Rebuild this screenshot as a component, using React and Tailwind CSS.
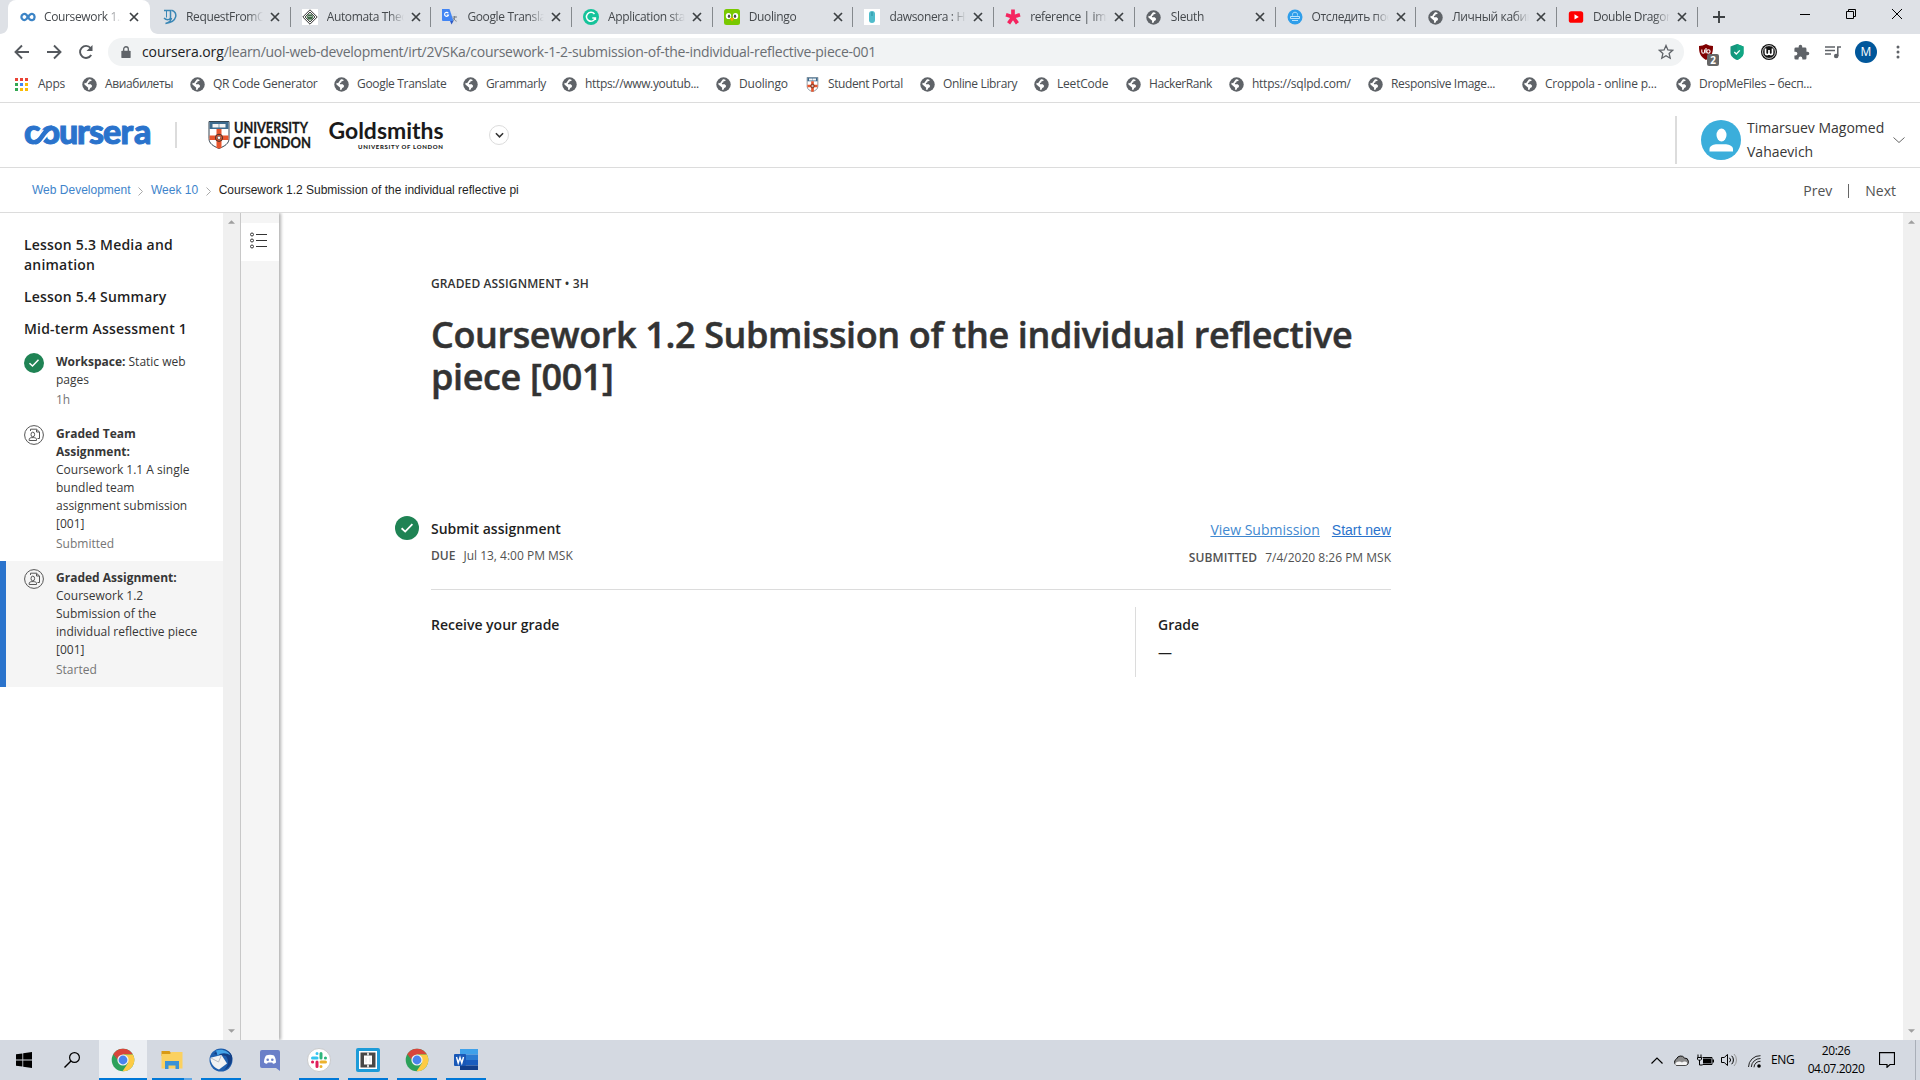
import React from "react";

const SEGOE = "font-['Open_Sans','Noto_Sans',sans-serif]";
const OPEN = "font-['Open_Sans',sans-serif]";
const ARIAL = "font-['Liberation_Sans',Arial,sans-serif]";

function Globe() {
  return (
    <svg viewBox="0 0 16 16" className="size-[15px] shrink-0">
      <circle cx="8" cy="8" r="7.7" fill="#5f6368" />
      <path d="M7.200 2.600c1.200-.3 2.200 0 3.200.6l-.6 1.100-1.700.2-.4 1.300-1.400.7.1 1.200h2.900l1.500 1.600-.5 1.500-1.500 1-.8 1.700c-.6.2-1.200.2-1.700 0l.3-2-1.500-1.500-2.500-2c-.1-.6 0-1.200.2-1.800l1.500.5L5.800 4.600Z" fill="#fff" />
    </svg>
  );
}

function Crest({ className }) {
  return (
    <svg viewBox="0 0 21 28" className={className}>
      <path d="M.5.5h20v17c0 5-4 7.500-10 10-6-2.500-10-5-10-10Z" fill="#fff" stroke="#34434f" />
      <path d="M1 1h19v7H1Z" fill="#3f6c8f" />
      <path d="M4 3h6.200v3.600H4ZM10.800 3H17v3.600h-6.200Z" fill="#f4f4f4" />
      <path d="M8 8h5v19l-2.500.6L8 27ZM1 14.500h19v4.500H1Z" fill="#e8552d" />
      <circle cx="10.500" cy="16.800" r="3.600" fill="#e8552d" stroke="#40302c" />
      <circle cx="10.500" cy="16.800" r="1.700" fill="#fff" stroke="#333" strokeWidth=".6" />
    </svg>
  );
}

function Fav({ kind }) {
  const c = "size-4 shrink-0";
  if (kind === "coursera")
    return (
      <svg viewBox="0 0 16 16" className={c}>
        <path d="M6.400 10C4.300 12.200 1.400 10.600 1.400 8s3-4.200 5.200-2l2.800 4c2 2.200 5.200 1 5.200-2s-3.200-4.200-5-2l-3.200 4" fill="none" stroke="#3c84c6" strokeWidth="2.300" />
      </svg>
    );
  if (kind === "req")
    return (
      <svg viewBox="0 0 16 16" className={c}>
        <path d="M3 1.500h6.500v7c0 2.500-4 3-6.500.5M10.500 1.200c6.500 1.500 6.500 12-6 13.300C8 13.500 10 12 10.500 9" fill="none" stroke="#3b87b5" strokeWidth="1.500" />
        <path d="M5.500 2v6.500" stroke="#3b87b5" strokeWidth="1" />
      </svg>
    );
  if (kind === "automata")
    return (
      <svg viewBox="0 0 16 16" className={c}>
        <path d="M0 0h16v16H0Z" fill="#fff" />
        <path d="m8 .8 7.200 7.200L8 15.200.8 8Z" fill="none" stroke="#333" />
        <path d="m8 3 5 5-5 5-5-5Z" fill="#cfe0cf" stroke="#333" strokeWidth=".9" />
        <path d="M6 5.500h4l1 2.500-1 2.500H6L5 8Z" fill="#42684a" />
        <path d="M6.500 7h1v1h-1ZM8.500 7h1v1h-1Z" fill="#fff" />
      </svg>
    );
  if (kind === "translate")
    return (
      <svg viewBox="0 0 16 16" className={c}>
        <path d="M7 4h8.500v11.500H9.500Z" fill="#dbdfe4" />
        <path d="M0 0h7.500l4 12H1a1 1 0 0 1-1-1Z" fill="#4285f4" />
        <path d="m8 12 3.500 0-2 3.500Z" fill="#2a56c6" />
        <path d="M6.300 4.300A2 2 0 1 0 6.500 6H4.700" fill="none" stroke="#fff" strokeWidth="1.100" />
        <path d="M10.500 8h4.500M12.700 7v1c0 2-1 3.500-2 4M11.500 9c.5 1.500 1.500 2.500 3 3.200" fill="none" stroke="#6b7480" strokeWidth=".9" />
      </svg>
    );
  if (kind === "grammarly")
    return (
      <svg viewBox="0 0 16 16" className={c}>
        <circle cx="8" cy="8" r="8" fill="#15c39a" />
        <path d="M11.500 5A4.500 4.500 0 1 0 12.300 9H9.300M12.400 9v2" fill="none" stroke="#fff" strokeWidth="1.500" />
      </svg>
    );
  if (kind === "duo")
    return (
      <svg viewBox="0 0 16 16" className={c}>
        <rect width="16" height="16" rx="2.500" fill="#78c800" />
        <ellipse cx="4.500" cy="7" rx="2.700" ry="3.100" fill="#fff" />
        <ellipse cx="11.500" cy="7" rx="2.700" ry="3.100" fill="#fff" />
        <ellipse cx="5" cy="7.200" rx="1.200" ry="1.700" fill="#4b4b4b" />
        <ellipse cx="11" cy="7.200" rx="1.200" ry="1.700" fill="#4b4b4b" />
        <path d="m6 9.500 2-1 2 1-2 3Z" fill="#ffa200" />
      </svg>
    );
  if (kind === "dawson")
    return (
      <svg viewBox="0 0 16 16" className={c}>
        <path d="M0 0h16v16H0Z" fill="#fff" />
        <rect x="5" y="2" width="6" height="12" rx="3" fill="#4fbccb" />
        <path d="M8 3v4" stroke="#2b8fa0" />
      </svg>
    );
  if (kind === "ref")
    return (
      <svg viewBox="0 0 16 16" className={c}>
        <path d="M8 8V.6M8 8l7-2.200M8 8l4.400 6.400M8 8l-4.400 6.400M8 8 1 5.800" stroke="#f5245f" strokeWidth="3.700" />
      </svg>
    );
  if (kind === "post")
    return (
      <svg viewBox="0 0 16 16" className={c}>
        <circle cx="8" cy="8" r="7.500" fill="#2f9eea" />
        <path d="M5.500 6.500v-1c0-3 5-3 5 0v1M3.500 7.500h9v2h-9ZM5 11.500h6" fill="none" stroke="#b9e2fc" strokeWidth="1" />
      </svg>
    );
  if (kind === "yt")
    return (
      <svg viewBox="0 0 16 16" className={c}>
        <rect x=".8" y="2.200" width="14.400" height="11.600" rx="2.600" fill="#f00" />
        <path d="m6.500 5.300 4.300 2.600-4.300 2.600Z" fill="#fff" />
      </svg>
    );
  return <Globe />;
}

function Cross() {
  return (
    <svg viewBox="0 0 10 10" className="size-[10px] shrink-0">
      <path d="m1 1 8 8M9 1 1 9" stroke="#3c4043" strokeWidth="1.700" />
    </svg>
  );
}

const TABS = [
  ["req", "RequestFromC"],
  ["automata", "Automata Theo"],
  ["translate", "Google Transla"],
  ["grammarly", "Application sta"],
  ["duo", "Duolingo"],
  ["dawson", "dawsonera : Ho"],
  ["ref", "reference | ima"],
  ["globe", "Sleuth"],
  ["post", "Отследить пос"],
  ["globe", "Личный кабин"],
  ["yt", "Double Dragon"],
];

function TabText({ children, first }) {
  return (
    <span
      className={`${first ? "ml-[8px] w-[77px]" : "ml-[9px] w-[77px]"} shrink-0 overflow-hidden whitespace-nowrap text-[12px] leading-4 tracking-[-0.360px] text-[#45494d] [mask-image:linear-gradient(to_right,black_80%,transparent)]`}
    >
      {children}
    </span>
  );
}

function TabStrip() {
  return (
    <div className="flex h-[34px] items-end bg-[#dee1e6] pl-2">
      <div className="relative flex h-[34px] w-[142px] shrink-0 items-center rounded-t-[8px] bg-white pl-3">
        <svg viewBox="0 0 8 8" className="absolute bottom-0 -left-2 size-2">
          <path d="M8 0v8H0c4.400 0 8-3.600 8-8Z" fill="#fff" />
        </svg>
        <svg viewBox="0 0 8 8" className="absolute -right-2 bottom-0 size-2">
          <path d="M0 0v8h8C3.600 8 0 4.400 0 0Z" fill="#fff" />
        </svg>
        <Fav kind="coursera" />
        <TabText first>Coursework 1.2</TabText>
        <span className="ml-[8px]"><Cross /></span>
      </div>
      {TABS.map(([icon, label], i) => (
        <div key={i} className="flex h-[34px] w-[140.700px] shrink-0 items-center pl-[11px]">
          <span className="flex w-4 shrink-0 justify-center"><Fav kind={icon} /></span>
          <TabText>{label}</TabText>
          <span className="ml-[7px]"><Cross /></span>
          <span className={i < 11 ? "ml-auto h-5 w-px bg-[#85898d]" : "hidden"} />
        </div>
      ))}
      <div className="flex h-[34px] flex-1 items-center pl-[15px]">
        <svg viewBox="0 0 12 12" className="size-3">
          <path d="M6 0v12M0 6h12" stroke="#3c4043" strokeWidth="1.900" />
        </svg>
        <div className="mr-[18px] ml-auto flex items-center gap-[36px] pb-[6px]">
          <svg viewBox="0 0 10 10" className="size-[10px]"><path d="M0 5.500h10" stroke="#000" /></svg>
          <svg viewBox="0 0 10 10" className="size-[10px]">
            <path d="M.5 2.500h7v7h-7ZM2.500 2V.5h7v7H8" fill="none" stroke="#000" />
          </svg>
          <svg viewBox="0 0 10 10" className="size-[10px]"><path d="m0 0 10 10M10 0 0 10" stroke="#000" /></svg>
        </div>
      </div>
    </div>
  );
}

function AddressRow() {
  return (
    <div className="flex h-9 items-center bg-white">
      <div className="flex w-[108px] shrink-0 items-center pl-[14px]">
        <svg viewBox="0 0 16 16" className="size-4"><path d="M15 8H2M8 1.500 1.500 8 8 14.500" fill="none" stroke="#55595e" strokeWidth="1.900" /></svg>
        <svg viewBox="0 0 16 16" className="ml-4 size-4"><path d="M1 8h13M8 1.500 14.500 8 8 14.500" fill="none" stroke="#55595e" strokeWidth="1.900" /></svg>
        <svg viewBox="0 0 16 16" className="ml-4 size-4">
          <path d="M13.200 11A6 6 0 1 1 12.600 4" fill="none" stroke="#55595e" strokeWidth="1.900" />
          <path d="M14.500 1v6h-6Z" fill="#55595e" />
        </svg>
      </div>
      <div className="flex h-7 w-[1576px] shrink-0 items-center rounded-full bg-[#f1f3f4] pr-[10px] pl-[13px]">
        <svg viewBox="0 0 10 14" className="h-[13px] w-[10px]">
          <path d="M1 5h8a1 1 0 0 1 1 1v6a1 1 0 0 1-1 1H1a1 1 0 0 1-1-1V6a1 1 0 0 1 1-1Z" fill="#5f6368" />
          <path d="M2.500 5.500V3.300a2.500 2.500 0 0 1 5 0v2.200" fill="none" stroke="#5f6368" strokeWidth="1.400" />
        </svg>
        <span className="ml-[11px] whitespace-nowrap text-[14px] leading-5 tracking-[-0.275px] text-[#6a6e73]">
          <span className="tracking-[-0.100px] text-[#202124]">coursera.org</span>/learn/uol-web-development/irt/2VSKa/coursework-1-2-submission-of-the-individual-reflective-piece-001
        </span>
        <svg viewBox="0 0 16 16" className="ml-auto size-4">
          <path d="m8 1.500 1.900 4.400 4.800.4-3.600 3.200 1.100 4.700L8 11.700l-4.200 2.500 1.100-4.700L1.300 6.300l4.800-.4Z" fill="none" stroke="#5f6368" strokeWidth="1.300" />
        </svg>
      </div>
      <div className="flex flex-1 items-center pl-[14px]">
        <span className="relative size-4">
          <svg viewBox="0 0 16 16" className="size-4">
            <path d="M8 0c2 1.400 4.500 1.800 7 1.900C15 8 14.500 12 8 16 1.500 12 1 8 1 1.900 3.500 1.800 6 1.400 8 0Z" fill="#800000" />
            <path d="M3.800 5.500v2.300a1.400 1.400 0 0 0 2.800 0V5.500M8 4v5.200" fill="none" stroke="#fff" strokeWidth="1.100" />
            <circle cx="10.400" cy="7.500" r="1.700" fill="none" stroke="#fff" strokeWidth="1.100" />
          </svg>
          <span className="absolute top-[10px] left-[9px] flex h-[12px] w-[12px] items-center justify-center rounded-[2px] bg-[#666] text-[10px] leading-none font-bold text-white">2</span>
        </span>
        <svg viewBox="0 0 16 16" className="ml-[15px] size-4">
          <path d="M8 0 14.500 2.500V9c0 3-3 5.500-6.500 7-3.500-1.500-6.500-4-6.500-7V2.500Z" fill="#15967d" />
          <path d="M8 0 14.500 2.500V9c0 3-3 5.500-6.500 7Z" fill="#11a683" />
          <path d="m5.300 8 2 2 3.500-3.600" fill="none" stroke="#fff" strokeWidth="1.300" />
        </svg>
        <svg viewBox="0 0 16 16" className="ml-4 size-4">
          <circle cx="8" cy="8" r="8" fill="#111" />
          <circle cx="8" cy="8" r="6.400" fill="none" stroke="#fff" strokeWidth=".8" />
          <path d="M4.500 4.500v4.500c0 2.200 3.300 2.200 3.500 0V6v3c.2 2.200 3.500 2.200 3.500 0V4.500" fill="none" stroke="#fff" strokeWidth="1.700" />
        </svg>
        <svg viewBox="0 0 24 24" className="ml-4 size-[17px]">
          <path d="M20.500 11H19V7a2 2 0 0 0-2-2h-4V3.500a2.500 2.500 0 0 0-5 0V5H4a2 2 0 0 0-2 2v3.800h1.500a2.700 2.700 0 0 1 0 5.400H2V20a2 2 0 0 0 2 2h3.800v-1.500a2.700 2.700 0 0 1 5.400 0V22H17a2 2 0 0 0 2-2v-4h1.500a2.500 2.500 0 0 0 0-5Z" fill="#5f6368" />
        </svg>
        <svg viewBox="0 0 16 16" className="ml-[15px] size-4">
          <path d="M0 3h10M0 6.500h10M0 10h6M12.800 12V3H16" fill="none" stroke="#5f6368" strokeWidth="1.500" />
          <circle cx="11.200" cy="12" r="2.300" fill="#5f6368" />
        </svg>
        <span className="ml-[14px] flex size-[22px] items-center justify-center rounded-full bg-[#01579b] text-[12px] leading-none text-white">M</span>
        <svg viewBox="0 0 4 16" className="ml-[19px] h-4 w-1">
          <circle cx="2" cy="3" r="1.500" fill="#5f6368" /><circle cx="2" cy="8" r="1.500" fill="#5f6368" /><circle cx="2" cy="13" r="1.500" fill="#5f6368" />
        </svg>
      </div>
    </div>
  );
}

const MARKS = [
  ["Авиабилеты", "w-[108px]", "tracking-[-0.400px]"],
  ["QR Code Generator", "w-[144px]", "tracking-[-0.290px]"],
  ["Google Translate", "w-[129px]", "tracking-[-0.320px]"],
  ["Grammarly", "w-[99px]", "tracking-[-0.350px]"],
  ["https://www.youtub...", "w-[154px]", "tracking-[-0.340px]"],
  ["Duolingo", "w-[89px]", "tracking-[-0.200px]"],
  ["Student Portal", "w-[115px]", "tracking-[-0.400px]"],
  ["Online Library", "w-[114px]", "tracking-[-0.350px]"],
  ["LeetCode", "w-[92px]", "tracking-[-0.200px]"],
  ["HackerRank", "w-[103px]", "tracking-[-0.400px]"],
  ["https://sqlpd.com/", "w-[139px]", "tracking-[-0.260px]"],
  ["Responsive Image...", "w-[154px]", "tracking-[-0.320px]"],
  ["Croppola - online p...", "w-[154px]", "tracking-[-0.200px]"],
  ["DropMeFiles – бесп...", "w-[150px]", "tracking-[-0.300px]"],
];

function Bookmarks() {
  const dots = ["#ea4335", "#ea4335", "#ea4335", "#34a853", "#4285f4", "#fbbc05", "#34a853", "#fbbc05", "#fbbc05"];
  return (
    <div className="flex h-[32px] items-center bg-white pb-[4px] text-[12px] leading-4 text-[#45494d]">
      <div className="flex w-[82px] shrink-0 items-center pl-[15px]">
        <span className="grid grid-cols-3 gap-[2px]">
          {dots.map((c, i) => <i key={i} className="size-[3px]" style={{ background: c }} />)}
        </span>
        <span className="ml-[10px] tracking-[-0.250px]">Apps</span>
      </div>
      {MARKS.map(([t, w, tr]) => (
        <div key={t} className={`flex shrink-0 items-center ${w}`}>
          {t === "Student Portal" ? <Crest className="h-[15px] w-[15px] shrink-0" /> : <Globe />}
          <span className={`ml-2 whitespace-nowrap ${tr}`}>{t}</span>
        </div>
      ))}
    </div>
  );
}

function SiteHeader() {
  return (
    <div className="flex h-[66px] items-center border-y border-[#dcdcdc] bg-white">
      <svg viewBox="0 0 130 26" className="ml-[23px] h-[26px] w-[130px] shrink-0" aria-label="coursera">
        <text x="1 17.500 36 54 66 80 97.500 111" y="21.500" fill="#2a73cc" stroke="#2a73cc" strokeWidth="1" fontFamily="Lato" fontWeight="900" fontSize="34">coursera</text>
        <path d="m16.500 17.500 6.500-7.500" stroke="#fff" strokeWidth="8" />
        <path d="M12 20.500c4.500-1 5-3.500 8-7.500s4.500-6.500 9.500-7.500" fill="none" stroke="#2a73cc" strokeWidth="4.600" />
      </svg>
      <span className="ml-[22px] h-[26px] w-[2px] bg-[#dcdcdc]" />
      <Crest className="ml-[31px] h-[28px] w-[22px]" />
      <svg viewBox="0 0 80 30" className="ml-[3px] h-[30px] w-[80px]">
        <g fill="#1a1a1a" stroke="#1a1a1a" strokeWidth=".3" fontFamily="Lato" fontWeight="700" fontSize="15.500">
          <text x="1" y="13" textLength="74" lengthAdjust="spacingAndGlyphs">UNIVERSITY</text>
          <text x="0" y="28" textLength="78" lengthAdjust="spacingAndGlyphs">OF LONDON</text>
        </g>
      </svg>
      <svg viewBox="0 0 118 32" className="ml-[14px] h-[32px] w-[118px]">
        <g fill="#1a1a1a" fontFamily="Lato" fontWeight="700">
          <text x="1.500" y="19.500" fontSize="23" textLength="115" lengthAdjust="spacingAndGlyphs">Goldsmiths</text>
          <text x="31" y="30" fontSize="6" fontWeight="900" textLength="85" lengthAdjust="spacing">UNIVERSITY OF LONDON</text>
        </g>
      </svg>
      <span className="ml-[44px] flex size-5 items-center justify-center rounded-full border border-[#dcdcdc]">
        <svg viewBox="0 0 10 6" className="h-[6px] w-[9px]"><path d="m1 1 4 4 4-4" fill="none" stroke="#333" strokeWidth="1.700" /></svg>
      </span>
      <span className="mt-[9px] ml-auto h-[48px] w-[2px] bg-[#dcdcdc]" />
      <svg viewBox="0 0 40 40" className="mt-[9px] ml-[24px] size-10">
        <circle cx="20" cy="20" r="20" fill="#3baedb" />
        <ellipse cx="20.500" cy="15" rx="5" ry="6.500" fill="#fff" />
        <path d="M8.500 31.500V29c0-3.500 5-4.800 7.500-4.800h8c2.500 0 8 1.300 8 4.800v2.500Z" fill="#fff" />
      </svg>
      <div className={`mt-[9px] ml-[6px] w-[138px] text-[14px] leading-6 whitespace-nowrap text-[#373737] ${OPEN}`}>
        <div>Timarsuev Magomed</div>
        <div>Vahaevich</div>
      </div>
      <svg viewBox="0 0 12 6" className="mt-[9px] mr-[15px] ml-[8px] h-[6px] w-[12px]"><path d="m.5.500 5.500 5 5.500-5" fill="none" stroke="#666" /></svg>
    </div>
  );
}

function Sep() {
  return <svg viewBox="0 0 5 9" className="mr-2 ml-[7.500px] mt-[2px] h-[9px] w-[5px]"><path d="m.5.500 4 4-4 4" fill="none" stroke="#aaa" /></svg>;
}

function Crumbs() {
  return (
    <div className="flex h-[45px] items-center border-b border-[#dcdcdc] bg-white pl-8">
      <div className={`flex items-center text-[12px] leading-4 ${ARIAL}`}>
        <span className="text-[#3e84cb]">Web Development</span>
        <Sep />
        <span className="text-[#3e84cb]">Week 10</span>
        <Sep />
        <span className="text-[#1f1f1f]">Coursework 1.2 Submission of the individual reflective pi</span>
      </div>
      <div className={`mt-[2px] mr-[24px] ml-auto flex items-center text-[14px] leading-5 text-[#525252] ${OPEN}`}>
        <span>Prev</span>
        <span className="mx-4 h-[14px] w-px bg-[#666]" />
        <span>Next</span>
      </div>
    </div>
  );
}

function Check({ className }) {
  return (
    <svg viewBox="0 0 20 20" className={className}>
      <circle cx="10" cy="10" r="10" fill="#1f8354" />
      <path d="m5.500 10.200 3 2.800 6-6.200" fill="none" stroke="#fff" strokeWidth="1.500" />
    </svg>
  );
}

function PeerIcon() {
  return (
    <svg viewBox="0 0 20 20" className="size-5 shrink-0">
      <g fill="none" stroke="#555" strokeWidth="1">
        <circle cx="10" cy="10" r="9.400" />
        <ellipse cx="8.800" cy="9.500" rx="1.800" ry="2.400" />
        <path d="M5.200 15.500v-1.400c0-1 1.500-1.300 2.600-1.500h2c1.200.2 2.700.5 2.700 1.500v1.400ZM6.500 6V4.200h6L15.500 7v6.500h-2M12.500 4.500V7h3" />
      </g>
    </svg>
  );
}

function Item({ icon, children, status, active }) {
  return (
    <div className={active ? "flex border-l-[6px] border-[#2a73cc] bg-[#f5f5f5] pt-2 pb-[7px] pl-[18px]" : "flex pt-2 pb-[7px] pl-6"}>
      <span className="h-5 w-8 shrink-0">{icon}</span>
      <div className="text-[12px] leading-[18px] whitespace-nowrap text-[#373737]">
        {children}
        <div className="mt-px text-[12px] leading-5 text-[#757575]">{status}</div>
      </div>
    </div>
  );
}

function Scroll() {
  return (
    <div className="flex w-[17px] shrink-0 flex-col items-center justify-between bg-[#f0f0f0] py-[7px]">
      <svg viewBox="0 0 8 4" className="h-1 w-[7px]"><path d="M0 4 4 0l4 4Z" fill="#9f9f9f" /></svg>
      <svg viewBox="0 0 8 4" className="h-1 w-[7px]"><path d="m0 0 4 4 4-4Z" fill="#9f9f9f" /></svg>
    </div>
  );
}

function Sidebar() {
  return (
    <div className={`flex w-[280px] shrink-0 ${OPEN}`}>
      <div className="w-[223px] shrink-0 pt-[22px]">
        <div className="mb-[6px] flex flex-col gap-3 pl-6 text-[14px] leading-5 font-semibold tracking-[0.200px] whitespace-nowrap text-[#1f1f1f]">
          <div>Lesson 5.3 Media and<br />animation</div>
          <div>Lesson 5.4 Summary</div>
          <div>Mid-term Assessment 1</div>
        </div>
        <Item icon={<Check className="size-5" />} status="1h"><b>Workspace:</b> Static web<br />pages</Item>
        <Item icon={<PeerIcon />} status="Submitted">
          <b>Graded Team<br />Assignment:</b><br />Coursework 1.1 A single<br />bundled team<br />assignment submission<br />[001]
        </Item>
        <Item active icon={<PeerIcon />} status="Started">
          <b>Graded Assignment:</b><br />Coursework 1.2<br />Submission of the<br />individual reflective piece<br />[001]
        </Item>
      </div>
      <Scroll />
      <div className="w-[39px] shrink-0 border-l border-[#c8c8c8] bg-[#f5f5f5] pt-[10px] shadow-[2px_0_3px_rgba(0,0,0,0.3)] [clip-path:inset(0_-8px_0_0)]">
        <div className="flex h-[38px] bg-white pt-[9px] pl-[9px]">
          <svg viewBox="0 0 17 18" className="h-[18px] w-[17px]">
            <g fill="none" stroke="#333">
              <circle cx="2" cy="2.500" r="1.500" /><circle cx="2" cy="8.500" r="1.500" /><circle cx="2" cy="14.500" r="1.500" />
              <path d="M6 2.500h11M6 8.500h11M6 14.500h11" />
            </g>
          </svg>
        </div>
      </div>
    </div>
  );
}

function Main() {
  return (
    <div className={`flex-1 bg-white pl-[151px] text-[#333] ${OPEN}`}>
      <div className="w-[960px]">
        <div className="pt-[62px] text-[12px] leading-[18px] font-semibold tracking-[0.120px]">GRADED ASSIGNMENT • 3H</div>
        <h1 className="mt-[21px] text-[36px] leading-[42px] font-semibold tracking-[-0.370px] whitespace-nowrap [-webkit-text-stroke:0.5px_#333]">
          Coursework 1.2 Submission of the individual reflective<br />piece [001]
        </h1>
        <div className="-ml-9 mt-[118px] flex">
          <Check className="mr-3 size-6 shrink-0" />
          <div className="pt-[3px]">
            <div className="text-[14px] leading-5 font-semibold text-[#1f1f1f]">Submit assignment</div>
            <div className="mt-[8px] text-[12px] leading-[18px] text-[#525252]"><span className="mr-2 font-semibold">DUE</span>Jul 13, 4:00 PM MSK</div>
          </div>
          <div className="ml-auto flex flex-col items-end pt-[4px]">
            <div className="flex gap-3 text-[14px] leading-5">
              <span className="text-[#4289d0] underline">View Submission</span>
              <span className={`text-[#2a73cc] underline ${ARIAL}`}>Start new</span>
            </div>
            <div className="mt-[9px] text-[12px] leading-[18px] text-[#525252]"><span className="mr-2 font-semibold tracking-[0.150px]">SUBMITTED</span>7/4/2020 8:26 PM MSK</div>
          </div>
        </div>
        <div className="mt-[22px] h-px bg-[#dcdcdc]" />
        <div className="mt-[17px] flex h-[70px] text-[14px] leading-5 font-semibold text-[#1f1f1f]">
          <div className="w-[704px] pt-[8px]">Receive your grade</div>
          <div className="border-l border-[#dcdcdc] pt-[8px] pl-[22px]">
            <div>Grade</div>
            <div className="mt-[8px] font-normal">—</div>
          </div>
        </div>
      </div>
    </div>
  );
}

function Chrome() {
  return (
    <svg viewBox="0 0 24 24" className="size-6">
      <circle cx="12" cy="12" r="11.300" fill="#2ca15a" />
      <path d="M12 12 2.200 6.300A11.300 11.300 0 0 1 21.800 6.300H12Z" fill="#d9453b" />
      <path d="M12 12h-5L2.200 6.300Z" fill="#d9453b" />
      <path d="M12 6.500h9.900A11.300 11.300 0 0 1 11.500 23.300L17 15Z" fill="#fdcb45" />
      <circle cx="12" cy="12" r="5.600" fill="#f3f3f3" />
      <circle cx="12" cy="12" r="4.400" fill="#4a84ee" />
    </svg>
  );
}

const TASKS = [
  { bar: "w-[48px]", active: true, icon: <Chrome /> },
  {
    bar: "w-[40px]", split: true, icon: (
      <svg viewBox="0 0 24 24" className="size-6">
        <path d="M1.500 3h8l1.500 2v3H1.500Z" fill="#d99a15" />
        <path d="M1.500 6h8.500l1.500-2h11v16.500h-21Z" fill="#fbd160" />
        <path d="M5 21v-8h14v8h-3.500v-3.500h-7V21Z" fill="#3a92d6" />
      </svg>
    ),
  },
  {
    bar: "w-[40px]", icon: (
      <svg viewBox="0 0 24 24" className="size-6">
        <circle cx="12" cy="12" r="11.500" fill="#1f5fae" />
        <path d="M5 6c4-6 15-6 18 2 1 6-2 12-8 14 5-5 5-9 2-14Z" fill="#123f86" />
        <path d="M7 2.500c6-2 12 0 14.500 5-4-3-9-3-13 0Z" fill="#43a3e8" />
        <path d="M1.500 9.800 12.500 7l5.500 8.500-8 6C5 20 1 15 1.500 9.800Z" fill="#f2f2f2" />
        <path d="m2 10 7.500 4 3-7" fill="none" stroke="#b9bdc4" />
      </svg>
    ),
  },
  {
    bar: null, icon: (
      <svg viewBox="0 0 24 24" className="size-6">
        <path d="M4 2h16a2 2 0 0 1 2 2v19l-4-3H4a2 2 0 0 1-2-2V4a2 2 0 0 1 2-2Z" fill="#6a7fc8" />
        <path d="M8 7.500c2.500-1 5.500-1 8 0 1.500 2.500 2 4.500 2 7-1 .8-2 1.200-3 1.300l-.8-1.300h-4.400L9 15.800c-1-.1-2-.5-3-1.300 0-2.500.5-4.500 2-7Z" fill="#fff" />
        <circle cx="9.700" cy="11.800" r="1.300" fill="#6a7fc8" /><circle cx="14.300" cy="11.800" r="1.300" fill="#6a7fc8" />
      </svg>
    ),
  },
  {
    bar: "w-[40px]", icon: (
      <svg viewBox="0 0 24 24" className="size-6">
        <circle cx="12" cy="12" r="11.500" fill="#fff" stroke="#bbb" strokeWidth=".7" />
        <g strokeWidth="3" strokeLinecap="round">
          <path d="M10 5.500v.1M5.500 10H10" stroke="#36c5f0" />
          <path d="M14 5.500V10M18.500 10h-.1" stroke="#2eb67d" />
          <path d="M14 14h4.500M14 18.500v-.1" stroke="#ecb22e" />
          <path d="M10 14v4.500M5.500 14h.1" stroke="#e01e5a" />
        </g>
      </svg>
    ),
  },
  {
    bar: "w-[40px]", icon: (
      <svg viewBox="0 0 24 24" className="size-6">
        <rect width="24" height="24" rx="2" fill="#1d9bd8" />
        <path d="M3 3h18v18H3Z" fill="#fff" />
        <path d="M4.500 4.500h15v15h-15Z" fill="#474747" />
        <path d="M8 7.500h8v9H8Z" fill="#fff" />
        <path d="M11 4.500h2v3h-2ZM11 16.500h2v3h-2Z" fill="#d6d6d6" />
        <path d="M9.500 9.500h1v5h-1ZM13.500 9.500h1v5h-1Z" fill="#e4e4e4" />
      </svg>
    ),
  },
  { bar: "w-[40px]", icon: <Chrome /> },
  {
    bar: "w-[40px]", icon: (
      <svg viewBox="0 0 24 24" className="size-6">
        <path d="M6 1h18v5.500H6Z" fill="#3fa1ea" /><path d="M6 6.500h18V12H6Z" fill="#2b7cd3" />
        <path d="M6 12h18v5.500H6Z" fill="#1a5dbe" /><path d="M6 17.500h18V22H6Z" fill="#123f8b" />
        <rect y="6" width="12" height="12" rx="1" fill="#1958b7" />
        <path d="m2.500 9 1.700 6L6 9.500 7.800 15l1.700-6" fill="none" stroke="#fff" strokeWidth="1.400" />
      </svg>
    ),
  },
];

function Taskbar() {
  return (
    <div className={`flex h-10 items-center bg-[#d4d9e1] ${SEGOE}`}>
      <div className="flex w-12 justify-center">
        <svg viewBox="0 0 16 16" className="size-4"><path d="M0 2.300 6.400 1.400V7.600H0ZM7.200 1.300 16 0v7.600H7.200ZM0 8.400h6.400v6.200L0 13.700ZM7.200 8.400H16V16l-8.800-1.300Z" fill="#000" /></svg>
      </div>
      <div className="flex w-[51px] pl-4">
        <svg viewBox="0 0 16 16" className="size-4"><circle cx="10.500" cy="5.500" r="4.900" fill="none" stroke="#000" strokeWidth="1.200" /><path d="M7 9 .5 15.500" stroke="#000" strokeWidth="1.400" /></svg>
      </div>
      <div className="flex h-10 gap-px">
        {TASKS.map((t, i) => (
          <div key={i} className={`flex h-10 w-12 flex-col items-center justify-between pt-2 ${t.active ? "bg-[#eceff3]" : ""}`}>
            {t.icon}
            {t.bar && (
              <span className={`flex h-[2px] justify-end bg-[#0078d7] ${t.bar}`}>
                {t.split && <i className="h-[2px] w-2 bg-[#5fa8e6]" />}
              </span>
            )}
          </div>
        ))}
      </div>
      <div className="ml-auto flex h-10 items-center text-[12px] text-black">
        <svg viewBox="0 0 12 7" className="h-[7px] w-3"><path d="m.5 6.500 5.500-5.500 5.500 5.500" fill="none" stroke="#000" strokeWidth="1.200" /></svg>
        <svg viewBox="0 0 16 11" className="ml-[10px] h-[11px] w-4">
          <path d="M4 10.500a3.500 3.500 0 0 1-.5-6.500A4.500 4.500 0 0 1 11.500 3a3.800 3.800 0 0 1 1 7.500Z" fill="#8b8b8b" stroke="#111" />
          <path d="M2 9c2-3 5-3 7-1.500 2-1.500 4-1 5.500.5-.5 1.500-1 2-2 2.200H4C3 10.200 2.500 9.800 2 9Z" fill="#f5f5f5" />
        </svg>
        <svg viewBox="0 0 17 12" className="ml-[8px] h-3 w-[17px]">
          <path d="M5.500 3.500h9.500v7h-9.500" fill="none" stroke="#000" /><path d="M6 4.500h8v5H6ZM15.500 5.500H17v3h-1.500Z" fill="#000" />
          <path d="M1 .5v3M4 .5v3M.5 3.500h4v1.700l-1 1h-2l-1-1ZM2.500 6v5h3" fill="none" stroke="#000" />
        </svg>
        <svg viewBox="0 0 17 14" className="ml-[7px] h-[14px] w-[17px]">
          <path d="M.5 4.500h2.700l3.300-3v11l-3.300-3H.500Z" fill="none" stroke="#000" />
          <path d="M8.500 4.800a3 3 0 0 1 0 4.400M10.700 2.800a6 6 0 0 1 0 8.400" fill="none" stroke="#000" />
          <path d="M13 1a8.500 8.500 0 0 1 0 12" fill="none" stroke="#999" />
        </svg>
        <svg viewBox="0 0 13 13" className="mt-[3px] ml-[10px] size-[13px]">
          <path d="M.5 12A11.500 11.500 0 0 1 12.500.7M3.300 12A9 9 0 0 1 12.500 3.500M6 12.300a6.200 6.200 0 0 1 6.500-6" fill="none" stroke="#222" /><circle cx="11" cy="11" r="1.800" fill="#000" />
        </svg>
        <span className="ml-[10px] w-[24px] tracking-[-0.400px]">ENG</span>
        <div className="ml-[11px] w-[60px] text-center leading-[18px] tracking-[-0.450px] whitespace-nowrap"><div>20:26</div><div>04.07.2020</div></div>
        <svg viewBox="0 0 16 16" className="ml-[13px] size-4"><path d="M.5.700h15v11.800H11l-3 2.800v-2.800H.5Z" fill="none" stroke="#000" strokeWidth="1.200" /></svg>
        <span className="mr-1 ml-[20px] h-10 w-px bg-[#a9afb8]" />
      </div>
    </div>
  );
}

export default function App() {
  return (
    <div className={`flex h-[1080px] w-[1920px] flex-col overflow-hidden bg-white ${SEGOE}`}>
      <TabStrip />
      <AddressRow />
      <Bookmarks />
      <SiteHeader />
      <Crumbs />
      <div className="flex min-h-0 flex-1">
        <Sidebar />
        <Main />
        <Scroll />
      </div>
      <Taskbar />
    </div>
  );
}
